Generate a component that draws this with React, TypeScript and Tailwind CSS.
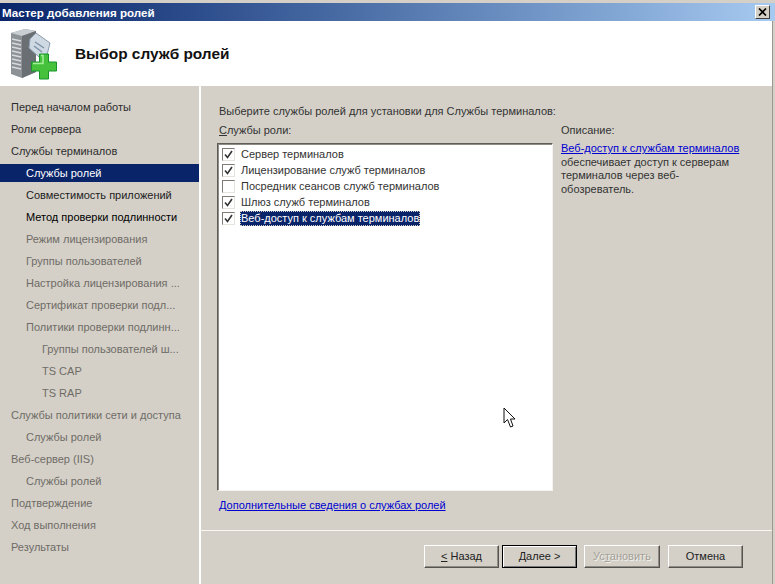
const navItems = [
  { label: 'Перед началом работы', indent: 'pl-[11px]', tone: 'text-[#2c2c2c]' },
  { label: 'Роли сервера', indent: 'pl-[11px]', tone: 'text-[#2c2c2c]' },
  { label: 'Службы терминалов', indent: 'pl-[11px]', tone: 'text-[#2c2c2c]' },
  { label: 'Службы ролей', indent: 'pl-[26px]', tone: 'text-white', active: true },
  { label: 'Совместимость приложений', indent: 'pl-[26px]', tone: 'text-[#1c1c1c]' },
  { label: 'Метод проверки подлинности', indent: 'pl-[26px]', tone: 'text-black' },
  { label: 'Режим лицензирования', indent: 'pl-[26px]', tone: 'text-[#6f6c66]' },
  { label: 'Группы пользователей', indent: 'pl-[26px]', tone: 'text-[#6f6c66]' },
  { label: 'Настройка лицензирования ...', indent: 'pl-[26px]', tone: 'text-[#6f6c66]' },
  { label: 'Сертификат проверки подл...', indent: 'pl-[26px]', tone: 'text-[#6f6c66]' },
  { label: 'Политики проверки подлинн...', indent: 'pl-[26px]', tone: 'text-[#6f6c66]' },
  { label: 'Группы пользователей ш...', indent: 'pl-[42px]', tone: 'text-[#6f6c66]' },
  { label: 'TS CAP', indent: 'pl-[42px]', tone: 'text-[#6f6c66]' },
  { label: 'TS RAP', indent: 'pl-[42px]', tone: 'text-[#6f6c66]' },
  { label: 'Службы политики сети и доступа', indent: 'pl-[11px]', tone: 'text-[#6f6c66]' },
  { label: 'Службы ролей', indent: 'pl-[26px]', tone: 'text-[#6f6c66]' },
  { label: 'Веб-сервер (IIS)', indent: 'pl-[11px]', tone: 'text-[#6f6c66]' },
  { label: 'Службы ролей', indent: 'pl-[26px]', tone: 'text-[#6f6c66]' },
  { label: 'Подтверждение', indent: 'pl-[11px]', tone: 'text-[#6f6c66]' },
  { label: 'Ход выполнения', indent: 'pl-[11px]', tone: 'text-[#6f6c66]' },
  { label: 'Результаты', indent: 'pl-[11px]', tone: 'text-[#6f6c66]' },
]

const roleServices = [
  { label: 'Сервер терминалов', checked: true },
  { label: 'Лицензирование служб терминалов', checked: true },
  { label: 'Посредник сеансов служб терминалов', checked: false },
  { label: 'Шлюз служб терминалов', checked: true },
  { label: 'Веб-доступ к службам терминалов', checked: true, selected: true },
]

function WizardIcon() {
  return (
    <svg width="48" height="52" viewBox="0 0 48 52" className="shrink-0">
      <path d="M2 5 L16 1 L27 3 L27 44 L13 50 L2 46 Z" fill="#8d9296" />
      <path d="M2 5 L16 1 L27 3 L13 8 Z" fill="#c9ced2" />
      <path d="M13 8 L27 3 L27 44 L13 50 Z" fill="#6a6f74" />
      <path d="M3 11 L12 13 M3 15 L12 17 M3 19 L12 21 M3 23 L12 25 M3 27 L12 29 M3 31 L12 33 M3 35 L12 37 M3 39 L12 41" stroke="#d8dbde" strokeWidth="1.5" />
      <path d="M21 11 L27 5 L41 15 L38 27 L30 29 L20 20 Z" fill="#cfd9e4" stroke="#8a9aaa" />
      <path d="M26 14 L35 20 M25 18 L33 24" stroke="#7f93a8" strokeWidth="1.5" />
      <path d="M30.5 26 H39.5 V34 H47.5 V43 H39.5 V51 H30.5 V43 H22.5 V34 H30.5 Z" fill="#45c13c" stroke="#17942a" />
      <path d="M32 27.5 H34 V35.5 H24" fill="none" stroke="#a5ee98" strokeWidth="1.5" />
    </svg>
  )
}

function CheckBox({ checked }: { checked: boolean }) {
  return (
    <span className="flex h-[13px] w-[13px] shrink-0 items-center justify-center border border-t-[#7e7b74] border-l-[#7e7b74] border-r-[#e6e4df] border-b-[#e6e4df] bg-white">
      {checked && (
        <svg width="9" height="9" viewBox="0 0 9 9">
          <path d="M1 4.5 L3.5 7.5 L8 1" fill="none" stroke="#333" strokeWidth="1.6" />
        </svg>
      )}
    </span>
  )
}

function WizardButton({ children, width, primary, disabled }: { children: React.ReactNode; width: string; primary?: boolean; disabled?: boolean }) {
  return (
    <button
      className={
        'flex h-[23px] items-center justify-center bg-[#d4d0c8] text-[11px] leading-none ' + width + ' ' +
        (primary
          ? 'border border-black shadow-[inset_1px_1px_0_#fff,inset_-1px_-1px_0_#777]'
          : 'border border-t-white border-l-white border-r-[#55534e] border-b-[#55534e] shadow-[inset_-1px_-1px_0_#8f8c85]') +
        (disabled ? ' text-[#a3a098] [text-shadow:1px_1px_0_#f2f0ec]' : ' text-[#222]')
      }
    >
      {children}
    </button>
  )
}

export default function App() {
  return (
    <div className="relative flex h-[584px] w-[775px] flex-col overflow-hidden bg-[#d4d0c8] font-['Liberation_Sans',sans-serif] text-[11px] text-[#333]">
      {/* Title bar */}
      <div className="h-[3px] shrink-0 bg-[#d4d0c8]" />
      <div className="flex h-[18px] shrink-0 items-center justify-between bg-gradient-to-r from-[#0a246a] to-[#a6caf0] pr-[5px] pl-[2px]">
        <span className="pt-[1px] text-[11.6px] font-bold text-white">Мастер добавления ролей</span>
        <span className="flex h-[14px] w-[15px] items-center justify-center border border-t-white border-l-white border-r-[#404040] border-b-[#404040] bg-[#d4d0c8]">
          <svg width="9" height="8" viewBox="0 0 9 8">
            <path d="M1 0.5 L8 7.5 M8 0.5 L1 7.5" stroke="#000" strokeWidth="1.7" />
          </svg>
        </span>
      </div>

      <div className="flex min-h-0 flex-1">
        <div className="flex min-w-0 flex-1 flex-col">
          {/* Header */}
          <div className="flex h-[65px] shrink-0 items-center gap-[18px] bg-white pl-[9px]">
            <WizardIcon />
            <h1 className="pt-[1px] text-[15.4px] font-bold text-[#111]">Выбор служб ролей</h1>
          </div>

          <div className="flex min-h-0 flex-1">
            {/* Steps */}
            <nav className="w-[199px] shrink-0 pt-[10px]">
              {navItems.map((item, i) => (
                <div key={i} className="flex h-[22px] items-center">
                  <div className={'flex h-[18px] w-full items-center ' + item.indent + ' ' + item.tone + (item.active ? ' bg-[#0a246a]' : '')}>
                    {item.label}
                  </div>
                </div>
              ))}
            </nav>
            <div className="w-[2px] shrink-0 bg-white" />

            {/* Page */}
            <div className="flex min-w-0 flex-1 flex-col">
              <div className="flex h-[444px] shrink-0 flex-col pt-[18px] pl-[18px]">
                <p className="h-[19px] leading-[14px]">Выберите службы ролей для установки для Службы терминалов:</p>
                <div className="flex gap-[8px]">
                  <div className="w-[334px] shrink-0">
                    <p className="h-[14px] leading-[14px]"><span className="underline">С</span>лужбы роли:</p>
                    <div className="mt-[6px] -ml-[2px] h-[348px] border border-t-[#5f5d58] border-l-[#5f5d58] border-r-[#f4f3f0] border-b-[#f4f3f0] bg-white pt-[2px] pl-[4px] shadow-[inset_1px_1px_0_#8f8c85]">
                      {roleServices.map((role) => (
                        <div key={role.label} className="flex h-[16px] items-center gap-[5px]">
                          <CheckBox checked={role.checked} />
                          <span className={role.selected ? 'flex h-[15px] items-center bg-[#0a246a] px-[1px] text-white outline-1 -outline-offset-1 outline-[#d4d0c8] outline-dotted' : 'px-[1px]'}>
                            {role.label}
                          </span>
                        </div>
                      ))}
                    </div>
                    <a className="mt-[7px] block leading-[14px] text-[#0000d0] underline">Дополнительные сведения о службах ролей</a>
                  </div>
                  <div className="w-[182px] shrink-0">
                    <p className="h-[19px] leading-[14px]">Описание:</p>
                    <p className="leading-[13.5px]">
                      <a className="text-[#0000d0] underline">Веб-доступ к службам терминалов</a> обеспечивает доступ к серверам терминалов через веб-обозреватель.
                    </p>
                  </div>
                </div>
              </div>
              <div className="h-[1px] shrink-0 bg-[#f7f6f3]" />

              {/* Footer buttons */}
              <div className="flex pt-[14px] pl-[223px]">
                <WizardButton width="w-[75px]"><span className="underline">&lt;</span>&nbsp;Назад</WizardButton>
                <div className="ml-[3px]">
                  <WizardButton width="w-[75px]" primary><span><span className="underline">Д</span>алее &gt;</span></WizardButton>
                </div>
                <div className="ml-[7px]">
                  <WizardButton width="w-[76px]" disabled><span>Ус<span className="underline">т</span>ановить</span></WizardButton>
                </div>
                <div className="ml-[8px]">
                  <WizardButton width="w-[75px]">Отмена</WizardButton>
                </div>
              </div>
            </div>
          </div>
        </div>
        <div className="w-[3px] shrink-0 border-l border-[#9b9890] bg-[#d4d0c8]" />
      </div>

      {/* Mouse pointer in the screenshot */}
      <svg width="14" height="22" viewBox="0 0 14 22" className="absolute top-[407px] left-[503px]">
        <path d="M1 1 L1 16 L4.5 12.5 L7.5 20 L10 19 L7.5 12 L12 12 Z" fill="#fff" stroke="#111" strokeWidth="1" />
      </svg>
    </div>
  )
}
